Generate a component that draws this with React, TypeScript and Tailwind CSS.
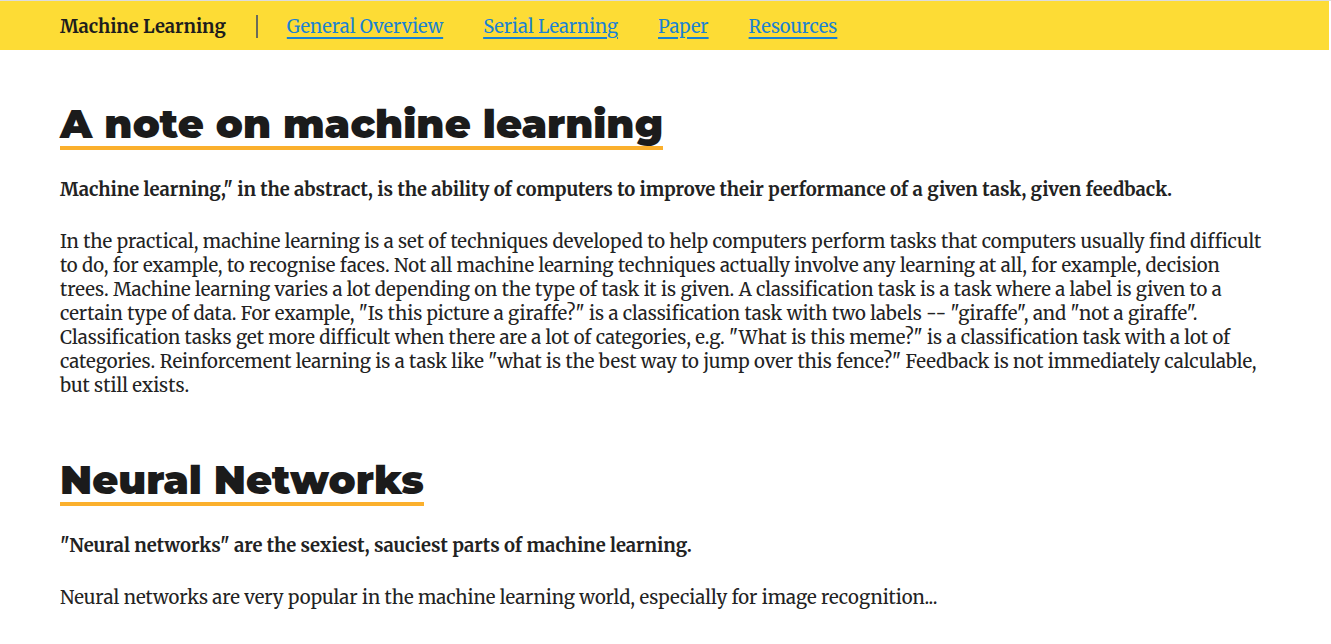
const NAV_LINKS = ["General Overview", "Serial Learning", "Paper", "Resources"];

const serif = "font-['Merriweather','DejaVu_Serif',serif]";
const display = "font-['Montserrat','Inter',sans-serif]";

function Heading({ children }: { children: React.ReactNode }) {
  return (
    <h2
      className={`${display} inline-block border-b-[4px] border-[#fbb02d] text-[40px] font-black leading-[44px] text-[#1b1b1b]`}
    >
      {children}
    </h2>
  );
}

export default function App() {
  return (
    <div className={`${serif} min-h-screen bg-white text-[#222]`}>
      <div className="border-t border-[#dcdcdc] pr-[2px]">
        <nav className="flex h-[49px] items-center bg-[#fddc35] px-[60px] pt-[2px]">
          <span className="text-[18.3px] font-bold text-[#1d1d1d]">Machine Learning</span>
          <span className="ml-[30px] mr-[29px] h-[23px] w-[2px] bg-[#6b6b5a]" />
          <div className="flex items-center gap-[40px]">
            {NAV_LINKS.map((link) => (
              <a
                key={link}
                href="#"
                className="text-[18.3px] text-[#1a82d3] underline decoration-[1.5px] underline-offset-[4px]"
              >
                {link}
              </a>
            ))}
          </div>
        </nav>
      </div>

      <main className="px-[60px] pt-[52px]">
        <section>
          <Heading>A note on machine learning</Heading>
          <p className="mt-[28px] text-[18.4px] font-bold leading-[24px]">
            Machine learning," in the abstract, is the ability of computers to improve their performance of a given
            task, given feedback.
          </p>
          <p className="mt-[28px] text-[18.5px] leading-[24px]">
            In the practical, machine learning is a set of techniques developed to help computers perform tasks that
            computers usually find difficult to do, for example, to recognise faces. Not all machine learning
            techniques actually involve any learning at all, for example, decision trees. Machine learning varies a lot
            depending on the type of task it is given. A classification task is a task where a label is given to a
            certain type of data. For example, "Is this picture a giraffe?" is a classification task with two labels --
            "giraffe", and "not a giraffe". Classification tasks get more difficult when there are a lot of categories,
            e.g. "What is this meme?" is a classification task with a lot of categories. Reinforcement learning is a
            task like "what is the best way to jump over this fence?" Feedback is not immediately calculable, but still
            exists.
          </p>
        </section>

        <section className="mt-[60px]">
          <Heading>Neural Networks</Heading>
          <p className="mt-[28px] text-[18.4px] font-bold leading-[24px]">
            "Neural networks" are the sexiest, sauciest parts of machine learning.
          </p>
          <p className="mt-[28px] text-[18.5px] leading-[24px]">
            Neural networks are very popular in the machine learning world, especially for image recognition...
          </p>
        </section>
      </main>
    </div>
  );
}
